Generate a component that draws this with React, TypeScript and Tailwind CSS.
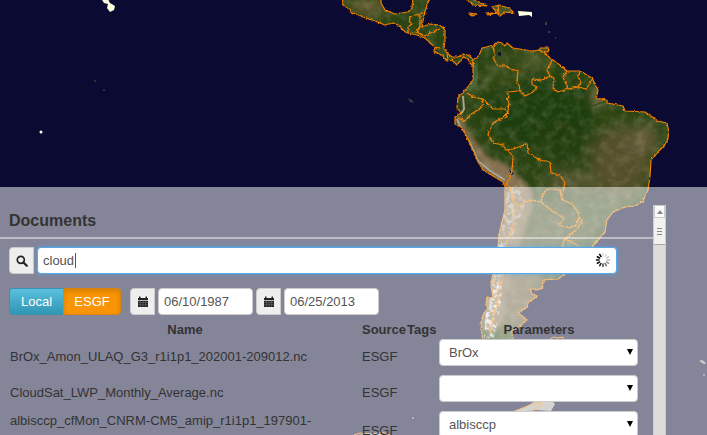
import { useState } from "react";

const SOUTH_AMERICA =
  "M473 59L477 58L480 53L482 48L490 46L495 45L498 42L502 43L505 46L507 43L513 48L532 51L540 50L545 53L550 58L560 65L567 71L580 71L592 78L598 90L596 98L607 100L607 103L623 106L625 111L645 112L658 121L667 123L669 133L667 142L658 152L651 161L650 176L648 190L642 202L635 206L625 207L613 212L607 220L605 232L593 246L583 262L565 274L558 279L543 280L543 288L537 290L530 289L532 294L537 296L528 303L527 307L518 313L525 318L527 320L521 325L512 332L513 340L510 350L487 350L482 337L481 323L483 315L488 308L486 305L487 297L493 298L491 285L494 265L498 245L500 230L505 210L505 187L503 182L483 170L478 162L467 137L461 127L455 124L455 117L461 113L457 108L458 98L467 88L473 80Z";

const CENTRAL_AMERICA =
  "M343 -3L342 4L347 8L353 13L363 17L375 21L385 25L393 23L398 25L404 31L407 33L417 35L425 38L430 43L435 47L434 52L442 55L447 61L452 60L457 65L461 60L463 57L468 59L470 63L473 66L473 59L468 55L463 54L458 57L452 57L447 53L444 48L445 40L445 30L440 25L430 24L422 27L423 20L425 12L427 5L430 -3L413 -3L412 8L408 12L395 14L385 10L381 3L381 -3Z";

const ANDES =
  "M459 112L463 122L476 142L488 157L506 164L522 180L533 192L530 214L522 238L514 267L507 292L504 320L495 332L483 330L486 300L497 244L505 208L505 187L482 169L467 137L455 121Z";

const BORDERS = [
  "M495 45L493 47L495 55L493 58L498 66L507 66L510 69L518 71L517 82L519 85L520 91L507 92L509 97L507 99L509 103L507 117L500 119L493 123L488 134L493 143L503 145L506 150L513 149L527 144L528 153L540 160L550 162L551 173L560 175L565 183L563 192",
  "M467 93L473 97L483 99L493 109L505 109L508 112L503 117",
  "M483 99L482 107L470 115L465 121L458 118",
  "M508 150L513 157L512 170L510 178L506 184L510 188L513 200L518 206L525 202L532 200L541 202L543 193L548 189L560 190L563 200L572 204L578 212L579 217L576 225L570 228L559 225L564 218L552 211L541 202",
  "M520 91L525 96L533 92L537 87L532 85L532 79L542 80L550 76L547 70L552 60",
  "M550 76L554 78L553 88L558 92L568 89L563 77L567 71",
  "M568 89L578 87L581 82L578 77L580 72M578 87L586 89L593 78",
  "M579 217L582 221L578 228L565 239L562 246L566 274M565 239L579 246",
  "M518 206L513 215L514 225L507 240L503 275L500 285L497 302L493 318L490 334",
  "M408 33L408 27L412 24L409 21L411 16L420 14L423 13M420 14L420 26L416 32L425 36L432 32L440 29M421 26L417 32M435 47L440 48M447 54L448 59",
];

const ISLANDS = [
  "M466 -2L473 5L487 6L477 1L470 -2",
  "M469 13L477 14L473 16Z",
  "M487 14L497 12L492 7L499 5L509 8L514 13L505 12L500 16L497 13L488 15ZM498 5L499 14",
  "M540 48L549 48L548 52L541 52Z",
];

function WorldMap() {
  return (
    <svg
      className="absolute inset-0 h-full w-full"
      viewBox="0 0 707 435"
      preserveAspectRatio="xMidYMin slice"
      role="img"
      aria-label="Satellite map"
    >
      <defs>
        <clipPath id="land">
          <path d={SOUTH_AMERICA} />
          <path d={CENTRAL_AMERICA} />
        </clipPath>
        <filter id="soft" x="-40%" y="-40%" width="180%" height="180%">
          <feGaussianBlur stdDeviation="7" />
        </filter>
        <filter id="softer" x="-20%" y="-20%" width="140%" height="140%">
          <feGaussianBlur stdDeviation="2" />
        </filter>
        <filter id="terrain" x="0" y="0" width="100%" height="100%">
          <feTurbulence type="fractalNoise" baseFrequency="0.11" numOctaves="4" seed="8" />
          <feColorMatrix values="0 0 0 0 0.66  0 0 0 0 0.6  0 0 0 0 0.4  1.3 0 0 0 -0.5" />
        </filter>
        <filter id="coast" x="0" y="0" width="100%" height="100%">
          <feTurbulence type="fractalNoise" baseFrequency="0.35" numOctaves="2" seed="3" result="n" />
          <feDisplacementMap in="SourceGraphic" in2="n" scale="3" xChannelSelector="R" yChannelSelector="G" />
        </filter>
        <filter id="snow" x="0" y="0" width="100%" height="100%">
          <feTurbulence type="fractalNoise" baseFrequency="0.2" numOctaves="3" seed="5" />
          <feColorMatrix values="0 0 0 0 0.75  0 0 0 0 0.75  0 0 0 0 0.75  4 0 0 0 -1.7" />
          <feComposite in2="SourceAlpha" operator="in" />
        </filter>
      </defs>
      <rect width="707" height="435" fill="#0b0a32" />
      <g clipPath="url(#land)">
        <rect x="330" width="377" height="435" fill="#2c4413" />
        <g filter="url(#soft)">
          <ellipse cx="540" cy="112" rx="56" ry="34" fill="#1d3c08" />
          <ellipse cx="560" cy="140" rx="28" ry="20" fill="#203d0a" />
          <ellipse cx="533" cy="60" rx="14" ry="5" fill="#6c6c38" />
          <ellipse cx="505" cy="75" rx="12" ry="6" fill="#46551f" />
          <ellipse cx="621" cy="162" rx="30" ry="36" fill="#554f2b" />
          <ellipse cx="643" cy="139" rx="15" ry="14" fill="#665c3a" />
          <ellipse cx="572" cy="182" rx="28" ry="10" fill="#595630" />
          <ellipse cx="600" cy="213" rx="32" ry="18" fill="#405327" />
          <ellipse cx="550" cy="235" rx="40" ry="35" fill="#4a552d" />
          <ellipse cx="519" cy="290" rx="24" ry="43" fill="#6b5f3f" />
          <ellipse cx="602" cy="96" rx="6" ry="8" fill="#9b875a" />
          <ellipse cx="368" cy="7" rx="20" ry="7" fill="#6c5b32" />
        </g>
        <path d={ANDES} fill="#86704f" filter="url(#softer)" />
        <path
          d="M496 70L489 80L478 89L471 98M496 63L500 56"
          fill="none"
          stroke="#686a3e"
          strokeWidth="2"
          filter="url(#softer)"
        />
        <path d="M476 62L476 80L468 92" fill="none" stroke="#4d7a4f" strokeWidth="3" filter="url(#softer)" />
        <rect x="330" width="377" height="400" filter="url(#terrain)" opacity="0.3" />
        <path
          d="M498 241L506 242L503 278L500 309L494 338L484 338L486 310L494 278Z"
          fill="#bbb"
          filter="url(#snow)"
        />
        <path
          d="M507 188L522 185L526 203L513 235L500 239L505 207Z"
          fill="#bbb"
          filter="url(#snow)"
          opacity="0.5"
        />
        <path
          d="M463 96L464 109L461 114M457 119L461 129L470 143L478 161L489 170L505 180"
          fill="none"
          stroke="#a9a593"
          strokeWidth="2"
        />
        <path
          d="M545 128Q557 110 575 110L595 105L607 101M530 99L545 106L552 113"
          fill="none"
          stroke="#2c4a18"
          strokeWidth="1"
        />
      </g>
      <path d="M498 52L501 52L501 56L498 55ZM509 169L514 174L511 175Z" fill="#11112b" />
      <g filter="url(#coast)" stroke="#f58000" strokeWidth="1.2" strokeLinejoin="round">
        <g fill="none">
          <path d={SOUTH_AMERICA} />
          <path d={CENTRAL_AMERICA} />
          {BORDERS.map((d) => (
            <path key={d} d={d} />
          ))}
        </g>
        <g fill="#455728">
          {ISLANDS.map((d) => (
            <path key={d} d={d} />
          ))}
        </g>
      </g>
      <g fill="#ffffe0">
        <path d="M97 -1L108 -1L110 3L115 6L114 10L110 12L107 8L108 4L104 3L102 0Z" />
        <path d="M518 11L532 12L532 17L529 15L519 16Z" />
        <circle cx="41" cy="132" r="1.5" />
      </g>
      <g fill="#374138">
        <circle cx="104" cy="90" r="1" />
        <circle cx="95" cy="81" r="1" />
        <path d="M408 98L412 100L414 103L410 102ZM545 22h2v3h-2zM548 31h2v2h-2zM555 37h1v2h-1z" />
      </g>
      <path
        d="M512 412L525 407L534 402L553 402L555 404L551 411L536 410L521 412Z"
        fill="#aaa9a4"
      />
      <path
        d="M512 412L528 406L540 402L541 406L531 411M550 339L554 337L558 338L563 337L563 341M354 435L360 433L372 434L382 432L390 435"
        fill="none"
        stroke="#f58000"
        strokeWidth="1"
      />
      <path d="M357 435L375 433L388 435ZM699 361L702 360L706 363L704 364Z" fill="#a2a3a3" />
      <circle cx="413" cy="418" r="1" fill="#777c8b" />
      <circle cx="704" cy="375" r="1" fill="#777c8b" />
    </svg>
  );
}

function SearchIcon() {
  return (
    <svg viewBox="0 0 14 14" className="size-3" aria-hidden="true">
      <circle cx="5.6" cy="5.6" r="4.1" fill="none" stroke="#222" strokeWidth="2" />
      <path d="M8.7 8.7L12.6 12.6" stroke="#222" strokeWidth="2.6" strokeLinecap="round" />
    </svg>
  );
}

function CalendarIcon() {
  return (
    <svg viewBox="0 0 12 12" className="size-3" aria-hidden="true">
      <path d="M1 2h1V0.500h1.500V2h5V0.500H10V2h1v2H1zM1 4.700h10V11H1z" fill="#222" />
      <path
        d="M1 6.600h10M1 8.700h10M3.400 5v6M6 5v6M8.600 5v6"
        stroke="#777"
        strokeWidth="0.5"
      />
    </svg>
  );
}

function Spinner() {
  const shades = ["#ddd", "#ddd", "#ccc", "#bbb", "#999", "#666", "#444", "#222", "#111", "#000", "#000", "#000"];
  return (
    <svg
      viewBox="-8 -8 16 16"
      className="pointer-events-none absolute top-[5px] right-1.5 size-4"
      role="img"
      aria-label="Loading"
    >
      {shades.map((shade, i) => (
        <path
          key={i}
          d="M0 -4V-6.500"
          stroke={shade}
          strokeWidth="1.5"
          strokeLinecap="round"
          transform={`rotate(${i * 30})`}
        />
      ))}
    </svg>
  );
}

function DateField({ label, value }: { label: string; value: string }) {
  return (
    <div className="flex gap-[3px]">
      <button
        type="button"
        aria-label={`Pick ${label}`}
        className="flex h-[27px] w-[25px] items-center justify-center rounded-l border border-[#ccc] bg-[#eee]"
      >
        <CalendarIcon />
      </button>
      <input
        type="text"
        aria-label={label}
        defaultValue={value}
        className="h-[27px] w-[95px] rounded border border-[#ccc] bg-white px-[5px] text-[#555] outline-none"
      />
    </div>
  );
}

const documents = [
  { name: "BrOx_Amon_ULAQ_G3_r1i1p1_202001-209012.nc", source: "ESGF", parameter: "BrOx" },
  { name: "CloudSat_LWP_Monthly_Average.nc", source: "ESGF", parameter: "" },
  { name: "albisccp_cfMon_CNRM-CM5_amip_r1i1p1_197901-200812.nc", source: "ESGF", parameter: "albisccp" },
];

function DocumentTable() {
  return (
    <table className="mt-[5px] w-full table-fixed border-collapse">
      <colgroup>
        <col />
        <col className="w-[46px]" />
        <col className="w-[32px]" />
        <col className="w-[200px]" />
      </colgroup>
      <thead>
        <tr className="h-[19px] font-bold leading-[19px]">
          <th>Name</th>
          <th className="pl-px text-left">Source</th>
          <th className="text-left">Tags</th>
          <th>Parameters</th>
        </tr>
      </thead>
      <tbody>
        {documents.map((doc) => (
          <tr key={doc.name} className="h-9">
            <td className="pr-2 pl-px">{doc.name}</td>
            <td className="pl-px">{doc.source}</td>
            <td />
            <td className="pr-px align-top">
              <div className="relative mb-[9px]">
                <select
                  aria-label={`Parameter for ${doc.name}`}
                  defaultValue={doc.parameter}
                  className="block h-[27px] w-full appearance-none rounded border border-[#ccc] bg-white px-[9px] text-[#555]"
                >
                  <option value={doc.parameter}>{doc.parameter}</option>
                </select>
                <svg
                  viewBox="0 0 6 6"
                  className="pointer-events-none absolute top-[10px] right-[5px] size-[6px]"
                  aria-hidden="true"
                >
                  <path d="M0 0H6L3 6Z" fill="#000" />
                </svg>
              </div>
            </td>
          </tr>
        ))}
      </tbody>
    </table>
  );
}

function ScrollTrack() {
  return (
    <div className="mt-[18px] flex w-[13px] flex-col border-x border-[#ccc] bg-[#dddcdb]" aria-hidden="true">
      <div className="flex h-[13px] items-center justify-center border border-[#ccc] bg-[#fafafa]">
        <svg viewBox="0 0 6 4" className="h-1 w-1.5">
          <path d="M0 4L3 0L6 4Z" fill="#888" />
        </svg>
      </div>
      <div className="flex h-[27px] flex-col items-center justify-center gap-[2px] border-b border-[#aaa] bg-[#f2f2f1]">
        <i className="h-px w-[5px] bg-[#888]" />
        <i className="h-px w-[5px] bg-[#888]" />
        <i className="h-px w-[5px] bg-[#888]" />
      </div>
    </div>
  );
}

export default function App() {
  const [query, setQuery] = useState("cloud");
  const [untouched, setUntouched] = useState(true);
  return (
    <main className="relative flex h-screen flex-col justify-end overflow-hidden bg-[#0b0a32] font-['Liberation_Sans',Arial,sans-serif] text-[13px] leading-5 text-[#333]">
      <WorldMap />
      <section className="relative flex h-[57%] bg-white/50 pr-[41px]">
        <div className="min-w-0 flex-1 overflow-hidden">
          <h1 className="mt-6 px-[9px] text-[16px] font-bold">Documents</h1>
          <hr className="mt-1.5 border-t-2 border-white/45" />
          <div className="pt-2 pl-[9px]">
            <div className="flex gap-[3px] pr-9">
              <button
                type="button"
                aria-label="Search"
                className="flex h-[27px] w-[25px] items-center justify-center rounded-l border border-[#ccc] bg-[#eee]"
              >
                <SearchIcon />
              </button>
              <div className="relative flex-1">
                <input
                  type="text"
                  aria-label="Search documents"
                  value={query}
                  onChange={(e) => {
                    setUntouched(false);
                    setQuery(e.target.value);
                  }}
                  className="block h-[27px] w-full rounded border border-[#52a8ec] bg-white px-[5px] text-[#555] shadow-[0_0_5px_#52a8ec99] outline-none"
                />
                {untouched && <i className="pointer-events-none absolute top-[6px] left-[38px] h-[15px] w-px bg-[#555]" />}
                <Spinner />
              </div>
            </div>
            <div className="mt-3.5 flex">
              <div className="mr-[9px] flex text-white [text-shadow:0_-1px_0_#00000040]">
                <button
                  type="button"
                  className="h-[27px] w-[54px] rounded-l border border-r-0 border-[#3a94af] bg-linear-to-b from-[#5bc0de] to-[#2f96b4]"
                >
                  Local
                </button>
                <button
                  type="button"
                  aria-pressed="true"
                  className="h-[27px] w-[58px] rounded-r border border-[#d9850d] bg-[#f89406] shadow-[inset_0_2px_4px_#00000026]"
                >
                  ESGF
                </button>
              </div>
              <div className="flex gap-[3px]">
                <DateField label="start date" value="06/10/1987" />
                <DateField label="end date" value="06/25/2013" />
              </div>
            </div>
            <div className="pr-3.5">
              <DocumentTable />
            </div>
          </div>
        </div>
        <ScrollTrack />
      </section>
    </main>
  );
}
